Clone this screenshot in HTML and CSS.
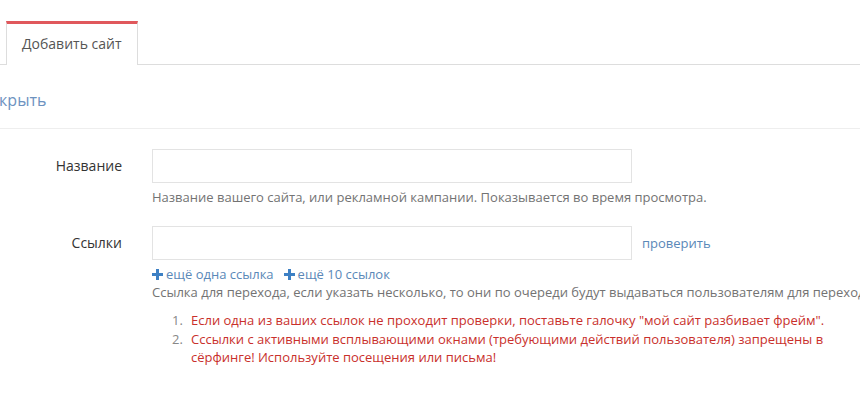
FILE: index.html
```html
<!DOCTYPE html>
<html lang="ru">
<head>
    <meta charset="UTF-8">
    <meta name="viewport" content="width=device-width, initial-scale=1.0">
    <title>Добавить сайт</title>
    <link rel="stylesheet" href="styles.css">
</head>
<body>
<ul class="tabs">
    <li class="tab active">Добавить сайт</li>
</ul>

<div class="toggle">
    <a href="#" class="toggle-link">Скрыть</a>
</div>

<form class="site-form">
    <div class="form-row">
        <label class="form-label">Название</label>
        <div class="form-field">
            <input type="text" class="form-input">
            <p class="help">Название вашего сайта, или рекламной кампании. Показывается во время просмотра.</p>
        </div>
    </div>

    <div class="form-row">
        <label class="form-label">Ссылки</label>
        <div class="form-field">
            <div class="input-line">
                <input type="text" class="form-input">
                <a href="#" class="check-link">проверить</a>
            </div>
            <div class="more-links">
                <a href="#" class="add-link"><span class="plus"></span>ещё одна ссылка</a>
                <a href="#" class="add-link"><span class="plus"></span>ещё 10 ссылок</a>
            </div>
            <p class="help nowrap">Ссылка для перехода, если указать несколько, то они по очереди будут выдаваться пользователям для перехода.</p>
            <ol class="warnings">
                <li>Если одна из ваших ссылок не проходит проверки, поставьте галочку "мой сайт разбивает фрейм".</li>
                <li>Сссылки с активными всплывающими окнами (требующими действий пользователя) запрещены в сёрфинге! Используйте посещения или письма!</li>
            </ol>
        </div>
    </div>
</form>
</body>
</html>
```

FILE: styles.css
```css
body {
    margin: 0;
    font-family: "Open Sans", Arial, sans-serif;
    font-size: 13px;
    color: #333;
    background: #fff;
    overflow: hidden;
}

a {
    text-decoration: none;
}

.tabs {
    list-style: none;
    margin: 21px 0 0;
    padding: 0 0 0 6px;
    border-bottom: 1px solid #ddd;
    display: flex;
}

.tab {
    font-size: 14px;
    color: #555;
    padding: 10px 15px 11px;
    border: 1px solid #ddd;
    border-top: 3px solid #e0585c;
    border-bottom: none;
    background: #fff;
    margin-bottom: -1px;
    height: 20px;
    line-height: 20px;
}

.toggle {
    padding: 24px 0 17px;
    border-bottom: 1px solid #eee;
}

.toggle-link {
    display: inline-block;
    margin-left: -11px;
    font-size: 16px;
    line-height: 22px;
    color: #6d92bf;
}

.site-form {
    padding-top: 20px;
}

.form-row {
    display: flex;
    margin-bottom: 9px;
}

.form-label {
    width: 122px;
    text-align: right;
    padding-top: 7px;
    line-height: 19px;
    margin-right: 30px;
    flex-shrink: 0;
    font-size: 14px;
}

.form-field {
    flex: 1;
    min-width: 0;
}

.input-line {
    display: flex;
    align-items: center;
}

.form-input {
    width: 480px;
    height: 34px;
    box-sizing: border-box;
    border: 1px solid #e3e3e3;
    padding: 6px 12px;
    font: inherit;
    margin: 0;
}

.check-link {
    margin-left: 10px;
    color: #5a88b8;
}

.help {
    margin: 5px 0 10px;
    line-height: 19px;
    color: #737373;
}

.nowrap {
    white-space: nowrap;
    margin: 0;
}

.more-links {
    margin-top: 5px;
    line-height: 18px;
    display: flex;
    gap: 10px;
}

.add-link {
    color: #5a88b8;
    display: flex;
    align-items: center;
}

.plus {
    width: 11px;
    height: 11px;
    margin-right: 3px;
    position: relative;
    display: inline-block;
}

.plus::before,
.plus::after {
    content: "";
    position: absolute;
    background: #3d80c4;
}

.plus::before {
    left: 0;
    top: 4px;
    width: 11px;
    height: 3px;
}

.plus::after {
    left: 4px;
    top: 0;
    width: 3px;
    height: 11px;
}

.warnings {
    margin: 9px 0 0;
    padding-left: 20px;
    list-style: none;
    counter-reset: item;
    line-height: 18.5px;
}

.warnings li {
    display: flex;
    color: #c9302c;
    counter-increment: item;
}

.warnings li::before {
    content: counter(item) ".";
    color: #888;
    width: 19px;
    flex-shrink: 0;
}
```
